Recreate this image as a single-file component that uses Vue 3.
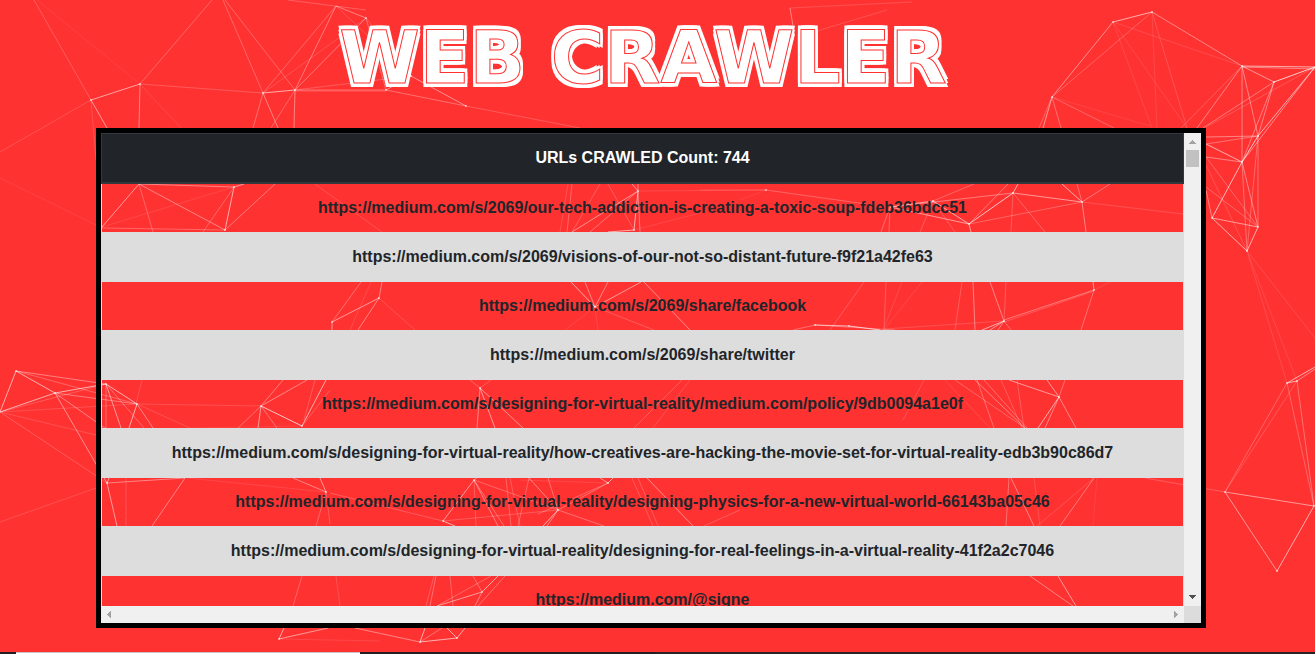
<script setup>
import { ref } from 'vue'

const count = ref(744)
const urls = [
  'https://medium.com/s/2069/our-tech-addiction-is-creating-a-toxic-soup-fdeb36bdcc51',
  'https://medium.com/s/2069/visions-of-our-not-so-distant-future-f9f21a42fe63',
  'https://medium.com/s/2069/share/facebook',
  'https://medium.com/s/2069/share/twitter',
  'https://medium.com/s/designing-for-virtual-reality/medium.com/policy/9db0094a1e0f',
  'https://medium.com/s/designing-for-virtual-reality/how-creatives-are-hacking-the-movie-set-for-virtual-reality-edb3b90c86d7',
  'https://medium.com/s/designing-for-virtual-reality/designing-physics-for-a-new-virtual-world-66143ba05c46',
  'https://medium.com/s/designing-for-virtual-reality/designing-for-real-feelings-in-a-virtual-reality-41f2a2c7046',
  'https://medium.com/@signe',
]

const pane = ref(null)
const scroll = (dx, dy) => pane.value.scrollBy(dx, dy)

// Particle links: x1 y1 x2 y2 opacity(%)
const links = `
34 0 91 100 20;37 0 140 84 7;91 100 140 84 55;140 84 212 0 25;140 84 263 93 20;91 100 0 152 15;91 100 107 128 50;91 100 96 160 15
140 84 139 128 40;140 84 181 128 10;0 178 96 225 8;263 93 295 90 60;263 93 223 0 25;225 0 295 90 25;263 93 336 6 25;295 90 336 6 35
263 93 366 18 15;295 90 366 18 35;295 90 411 76 20;295 90 386 90 30;295 91 386 91 20;263 93 253 128 30;263 93 278 128 40;295 90 271 128 25
295 90 294 128 40;288 0 366 10 22;336 6 366 18 40;366 18 386 90 30;366 18 411 76 18;411 76 386 90 45;411 76 466 106 45;386 90 466 106 30;336 6 411 76 15;466 106 580 128 20
790 8 793 26 40;790 8 912 2 15;887 10 810 33 15
1052 97 1113 22 45;1052 97 1152 12 22;1113 22 1152 12 60;1152 12 1242 66 40;1113 22 1242 66 12;1113 22 1152 128 10;1113 22 1187 128 10;1152 12 1157 128 10;1152 12 1187 128 15
1242 66 1315 67 60;1242 67 1315 69 40;1242 66 1274 82 50;1274 82 1315 67 75;1242 66 1258 136 40;1242 66 1242 162 40;1242 66 1197 128 40;1242 66 1181 128 20;1274 82 1203 128 35
1274 82 1258 136 40;1274 82 1242 162 38;1315 67 1258 136 60;1315 67 1242 162 45;1315 67 1206 127 18;1258 136 1242 162 70;1258 136 1206 137 40;1258 136 1206 144 30;1242 162 1206 144 60
1242 162 1206 157 40;1242 162 1212 218 65;1242 162 1258 227 40;1242 162 1247 251 30;1258 136 1258 227 30;1258 136 1247 251 25;1212 218 1258 227 50;1212 218 1247 251 60;1258 227 1247 251 60
1212 218 1206 190 40;1258 227 1206 157 25;1258 227 1206 187 25;1247 251 1206 165 15;1052 97 1043 128 50;1052 97 1039 128 25;1052 97 1061 128 30;1052 97 1114 128 25;1052 97 1150 126 8
1287 383 1315 367 60;1287 383 1297 381 60;1297 381 1315 369 40;1287 383 1225 492 25;1297 381 1225 492 18;1287 383 1314 506 25;1297 381 1314 506 30;1225 492 1314 506 50;1225 492 1277 571 50
1314 506 1277 571 60;1247 251 1287 383 12;1247 251 1297 381 10;1247 251 1315 338 12;1225 492 1145 478 20
16 371 0 412 60;16 371 55 393 60;16 371 106 384 38;16 371 137 404 25;55 393 0 412 60;55 393 106 384 60;55 393 137 404 35;55 393 107 483 45;55 393 112 433 40;0 412 137 404 15;0 412 106 384 20
0 412 107 483 20;0 412 96 435 15;0 522 96 488 15;106 384 137 404 60;106 384 121 428 50;106 384 106 428 30;106 384 144 428 28;137 404 129 428 60;137 404 153 428 40;137 404 261 406 15;137 404 190 428 15
261 406 302 426 70;261 406 238 428 30;261 406 258 428 50;261 406 277 428 30;261 406 283 380 35;261 406 307 380 40;302 426 326 380 60;302 426 190 428 8;302 426 330 390 20;315 380 304 420 20;142 380 136 404 15
107 483 109 478 50;107 483 185 478 40;107 483 117 526 50;185 478 152 526 40;126 478 126 526 15;326 492 293 478 40;326 492 320 478 50;326 492 187 478 10;326 492 316 526 25;326 492 330 524 20
279 639 284 628 60;279 639 328 628 50;279 639 380 641 10;302 576 293 606 25;336 576 340 606 15
102 227 139 184 50;139 184 234 187 40;139 184 225 230 40;139 184 153 232 25;234 187 225 230 60;234 187 203 232 25;234 187 102 227 10;234 187 244 184 50;225 230 275 184 35;102 228 225 230 25;315 184 382 232 15
638 191 634 230 60;638 191 572 232 45;638 191 590 232 30;638 191 632 184 50;638 191 638 184 40;638 191 640 232 35;634 230 608 232 60;638 191 766 190 12;572 184 567 232 25;568 184 560 232 15;608 184 634 230 20;600 184 572 232 20;634 230 700 213 10
766 190 866 204 25;766 190 700 190 15;766 190 740 200 8;890 207 1013 193 35;933 201 969 224 60;890 207 969 224 50;890 207 933 201 50;1013 193 969 224 70;1013 193 1082 202 50;1013 193 1018 184 60
933 201 974 184 25;969 224 1008 184 35;1082 202 969 224 25;1082 202 1062 184 60;1082 202 1077 184 30;1082 202 1110 184 35;1082 202 1086 232 40;1082 202 1183 214 15;969 224 971 232 50
1013 193 1011 232 20;1013 193 1045 232 25;890 207 881 232 30;890 207 889 232 25;933 201 955 232 20;933 201 920 232 20
379 298 382 282 40;379 298 332 322 50;379 298 358 330 40;379 298 415 330 15;332 322 361 282 30;332 322 332 330 50;371 282 350 330 12
595 307 571 282 60;595 307 585 282 40;595 307 608 282 40;595 307 641 282 50;595 307 654 330 20;595 307 598 330 10;595 307 565 330 10;644 282 690 330 45
815 325 849 326 60;849 326 880 330 70;815 325 793 330 30;815 325 895 330 30;1004 321 982 330 60;1004 321 990 330 50;1004 321 998 330 40;1004 320 1094 290 35;1004 322 1094 291 20;1004 321 990 282 40
1004 321 1006 282 20;1004 321 884 329 15;1004 321 1011 330 30;1094 290 1093 282 50;1094 290 1081 330 30;1094 290 1110 282 10;886 282 884 330 20;864 282 830 330 20;922 282 884 330 10;902 282 884 328 12;973 282 975 330 40;962 282 955 330 20
480 388 477 428 40;480 388 495 428 50;480 388 523 428 45;480 388 470 380 25;480 388 491 380 20;1059 397 1009 380 50;1059 397 1047 380 50;1059 397 1065 380 30;1059 397 1038 428 60;1059 397 1045 428 40;1059 397 1076 428 40
955 380 1025 428 25;975 380 1025 428 40;984 380 1027 428 30;977 380 994 428 30;1001 380 1022 428 20;1017 380 1024 428 20;945 380 990 428 10;924 380 903 420 15;682 380 634 428 20;690 380 653 428 15
474 480 443 521 50;474 480 498 526 40;474 480 504 526 30;474 480 558 510 25;474 480 476 526 20;474 480 477 478 40;443 521 455 526 60;443 521 558 510 20;443 521 330 493 20;558 510 529 478 40;558 510 548 478 30
558 510 608 483 30;558 510 543 526 60;558 510 547 526 40;558 510 604 526 30;608 483 600 478 50;608 483 613 478 60;608 483 538 514 25;608 483 520 480 10;506 478 511 526 25;510 478 520 526 20;529 478 518 526 25
632 478 653 526 20;638 478 658 526 20;647 478 693 526 45;740 510 704 526 20;1009 478 1006 526 30;1011 478 1034 526 40;1034 478 1040 526 15;1094 478 1060 526 35;1094 478 1037 526 15;1097 478 1093 526 8
482 592 473 576 30;482 592 498 576 60;482 592 437 606 50;482 592 475 606 40;505 576 478 606 30;491 576 437 606 25;436 576 430 606 30;434 576 426 606 20;450 576 453 606 25;1030 576 1073 606 40;1058 576 1076 606 50
420 642 457 638 60;420 642 425 628 60;420 642 355 628 40;420 642 442 628 30;457 638 447 628 60;457 638 465 628 60
`
  .trim()
  .split(/[;\n]/)
  .map((row) => row.trim().split(' ').map(Number))

const dots = `91 100;140 84;263 93;295 90;366 18;411 76;386 90;466 106;1052 97;1113 22;1152 12;1242 66;1274 82;1258 136;1242 162;1212 218;1258 227;1247 251;1287 383;1297 381;1225 492;1314 506;1277 571;16 371;55 393;106 384;137 404;261 406;302 426;107 483;326 492;279 639;234 187;225 230;638 191;634 230;766 190;933 201;1013 193;969 224;1082 202;379 298;332 322;595 307;815 325;849 326;1004 321;1094 290;480 388;1059 397;474 480;443 521;558 510;608 483;482 592;420 642;457 638`
  .split(';')
  .map((p) => p.split(' ').map(Number))
</script>

<template>
  <div class="page">
    <svg class="particles" viewBox="0 0 1315 654" preserveAspectRatio="xMidYMin slice" aria-hidden="true">
      <line
        v-for="(l, i) in links"
        :key="'l' + i"
        :x1="l[0]"
        :y1="l[1]"
        :x2="l[2]"
        :y2="l[3]"
        :stroke-opacity="l[4] / 100"
      />
      <circle v-for="(d, i) in dots" :key="'d' + i" :cx="d[0]" :cy="d[1]" r="1" />
    </svg>

    <main class="container">
      <h1 class="title">WEB CRAWLER</h1>

      <section class="frame">
        <div ref="pane" class="pane">
          <table class="results">
            <thead>
              <tr>
                <th scope="col">URLs CRAWLED Count: {{ count }}</th>
              </tr>
            </thead>
            <tbody>
              <tr v-for="url in urls" :key="url">
                <td>{{ url }}</td>
              </tr>
            </tbody>
          </table>
        </div>
        <div class="bar vertical">
          <button type="button" aria-label="Scroll up" @click="scroll(0, -49)">
            <svg width="17" height="17" shape-rendering="crispEdges"><path d="M5 11h7v-1h-1v-1h-1v-1h-1v-1h-1v1h-1v1h-1v1h-1z" fill="#a3a3a3" /></svg>
          </button>
          <div class="thumb"></div>
          <button type="button" class="end" aria-label="Scroll down" @click="scroll(0, 49)">
            <svg width="17" height="17" shape-rendering="crispEdges"><path d="M5 6h7v1h-1v1h-1v1h-1v1h-1v-1h-1v-1h-1v-1h-1z" fill="#505050" /></svg>
          </button>
        </div>
        <div class="bar horizontal">
          <button type="button" aria-label="Scroll left" @click="scroll(-40, 0)">
            <svg width="17" height="17" shape-rendering="crispEdges"><path d="M10 5v7h-1v-1h-1v-1h-1v-1h-1v-1h1v-1h1v-1h1v-1z" fill="#a3a3a3" /></svg>
          </button>
          <button type="button" class="end" aria-label="Scroll right" @click="scroll(40, 0)">
            <svg width="17" height="17" shape-rendering="crispEdges"><path d="M7 5v7h1v-1h1v-1h1v-1h1v-1h-1v-1h-1v-1h-1v-1z" fill="#a3a3a3" /></svg>
          </button>
        </div>
        <div class="corner"></div>
      </section>
    </main>

    <footer class="strip">
      <span class="strip-edge"></span>
      <span class="strip-light"></span>
      <span class="strip-dark"></span>
      <span class="strip-rest"></span>
    </footer>
  </div>
</template>

<style>
body {
  margin: 0;
  background: #ff3232;
}
</style>

<style scoped>
.page {
  position: relative;
  display: flex;
  flex-direction: column;
  min-height: 100vh;
  overflow: hidden;
  background: #ff3232;
  font-family: "Liberation Sans", Arial, sans-serif;
  font-size: 16px;
  line-height: 24px;
  color: #212529;
}
.particles {
  position: absolute;
  inset: 0;
  width: 100%;
  height: 100%;
}
.particles line {
  stroke: #fff;
  stroke-width: 1;
}
.particles circle {
  fill: #fff;
  fill-opacity: 0.6;
}
.container {
  position: relative;
  flex: 1;
  box-sizing: border-box;
  width: 100%;
  max-width: 1153px;
  margin: 0 auto;
  padding: 12px 28px 24px 15px;
}
.title {
  margin: 0 0 24px;
  padding-right: 16px;
  text-align: center;
  font-family: "DejaVu Sans", Verdana, sans-serif;
  font-size: 73px;
  line-height: 92px;
  font-weight: 700;
  white-space: nowrap;
  color: #fff;
  -webkit-text-stroke: 1px #ff3232;
  text-shadow:
    3px 0 #fff, -3px 0 #fff, 0 4px #fff, 0 -4px #fff,
    2px 2px #fff, -2px 2px #fff, 2px -2px #fff, -2px -2px #fff,
    3px 4px #fff, -3px 4px #fff, 3px -4px #fff, -3px -4px #fff;
}
.frame {
  display: grid;
  grid-template: minmax(0, 1fr) 17px / minmax(0, 1fr) 17px;
  box-sizing: border-box;
  height: 500px;
  border: 5px solid #000;
}
.pane {
  overflow: auto;
  scrollbar-width: none;
}
.results {
  width: 100%;
  border-collapse: separate;
  border-spacing: 0;
  text-align: center;
  font-weight: 700;
}
.results th {
  padding: 12px;
  border: 1px solid #32383e;
  border-bottom-width: 2px;
  background: #212529;
  color: #fff;
}
.results td {
  padding: 12px;
  border: solid #ddd;
  border-width: 0 1px;
}
.results tbody tr:nth-child(even) td {
  padding: 13px 12px;
  background: #ddd;
}
.bar {
  display: flex;
  background: #f0f0f0;
}
.vertical {
  flex-direction: column;
}
.bar button {
  width: 17px;
  height: 17px;
  padding: 0;
  border: 0;
  background: none;
}
.bar svg {
  display: block;
}
.bar .end {
  margin: auto 0 0 auto;
}
.thumb {
  height: 17px;
  margin: 0 2px;
  background: #c1c1c1;
}
.corner {
  background: #dcdcdc;
}
.strip {
  position: relative;
  display: flex;
  height: 2px;
}
.strip-edge {
  width: 16px;
  background: #231f20;
}
.strip-light {
  box-sizing: border-box;
  width: 344px;
  border-top: 1px solid #c8c2c2;
  background: #fff;
}
.strip-dark {
  width: 295px;
  background: #231f20;
}
.strip-rest {
  flex: 1;
  background: #2b2224;
}
</style>
